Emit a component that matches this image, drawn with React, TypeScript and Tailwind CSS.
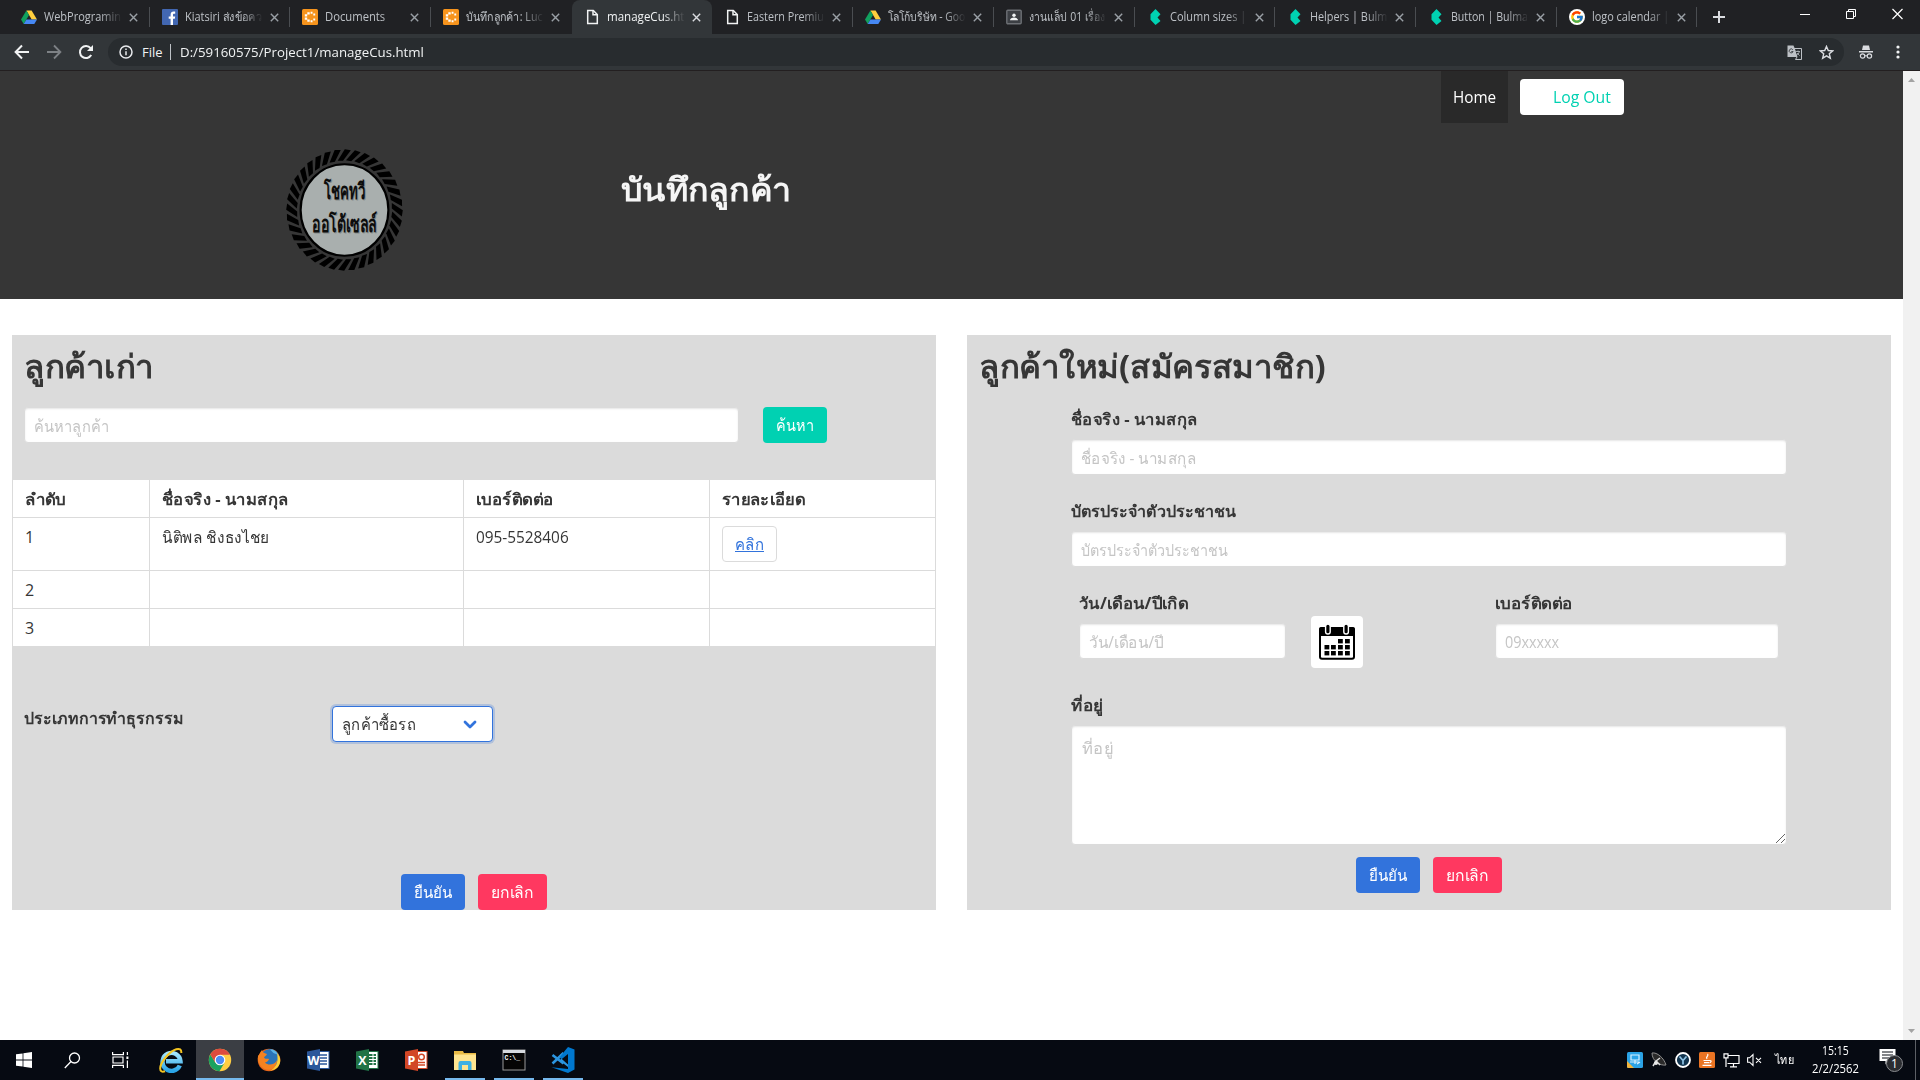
import React, { useLayoutEffect, useRef, useState } from "react";
import { FcGoogle } from "react-icons/fc";

/* Text that is condensed or widened to a given width in pixels. */
function Fit({ w, className = "", children }: { w: number; className?: string; children: React.ReactNode }) {
  const ref = useRef<HTMLSpanElement>(null);
  const [scale, setScale] = useState(1);
  useLayoutEffect(() => {
    if (ref.current) setScale(w / ref.current.offsetWidth);
  }, [w]);
  return (
    <span className={`inline-flex shrink-0 align-top ${className}`} style={{ width: w }}>
      <span ref={ref} className="inline-block origin-left whitespace-nowrap" style={{ transform: `scaleX(${scale})` }}>
        {children}
      </span>
    </span>
  );
}

const DriveIcon = () => (
  <svg width="16" height="16" viewBox="0 0 16 16">
    <path d="M5.4 1.5h5.2L16 10.6h-5.3z" fill="#ffcf3e" />
    <path d="M5.4 1.5L8 6 2.7 15 0 10.6z" fill="#11a05e" />
    <path d="M5.4 10.6H16L13.3 15H2.7z" fill="#4688f4" />
  </svg>
);
const FacebookIcon = () => (
  <svg width="16" height="16" viewBox="0 0 16 16">
    <rect width="16" height="16" rx="1" fill="#4267b2" />
    <path d="M8.6 16V9.800H6.700V7.400h1.900V5.700c0-2 1.200-3.100 3-3.100.8 0 1.600.1 1.600.1v2.100h-1.100c-1 0-1.100.5-1.100 1.100v1.500h2.200l-.4 2.400H11V16z" fill="#fff" />
  </svg>
);
const LucidIcon = () => (
  <svg width="16" height="16" viewBox="0 0 16 16" fill="#fff">
    <rect width="16" height="16" rx="1.5" fill="#f7941d" />
    <path d="M2.800 5.200h2.400v2.200H2.800zM2.800 8.600h2.400v2.200H2.800zM5.300 3.200h2.400v2.200H5.300zM5.300 10.600h2.400v2.200H5.300z" />
    <path d="M8.600 2.800h1.900v1.900H8.600zM8.600 11.300h1.900v1.900H8.600zM11.300 4.600h1.900v1.900h-1.900zM11.300 9.500h1.900v1.900h-1.900z" />
  </svg>
);
const FileIcon = () => (
  <svg width="16" height="16" viewBox="0 0 16 16" fill="none" stroke="#f1f3f4" strokeWidth="1.5">
    <path d="M3.700 1.500h5.600l4 4v9H3.700z" />
    <path d="M9 1.800v4h4" />
  </svg>
);
const ClassroomIcon = () => (
  <svg width="16" height="16" viewBox="0 0 16 16">
    <rect x=".8" y="1.300" width="14.400" height="13.400" rx="1" fill="#3c3f44" stroke="#6d7075" strokeWidth="1.400" />
    <circle cx="8" cy="6.300" r="1.700" fill="#f1f3f4" />
    <path d="M4 11.300c0-3.600 8-3.600 8 0z" fill="#f1f3f4" />
  </svg>
);
const BulmaIcon = () => (
  <svg width="16" height="16" viewBox="0 0 16 16">
    <path d="M3.500 5.300L8.500 0l5 5.300-3 3.200 3 3.400-5 4.100-5-5.300z" fill="#00d1b2" />
  </svg>
);
const GoogleIcon = () => (
  <span className="flex size-4 items-center justify-center rounded-full bg-white">
    <FcGoogle size={14} />
  </span>
);

const tabs = [
  { icon: <DriveIcon />, title: "WebProgramin", w: 77 },
  { icon: <FacebookIcon />, title: "Kiatsiri ส่งข้อคว", w: 77 },
  { icon: <LucidIcon />, title: "Documents", w: 60 },
  { icon: <LucidIcon />, title: "บันทึกลูกค้า: Luc", w: 77 },
  { icon: <FileIcon />, title: "manageCus.ht", w: 77, active: true },
  { icon: <FileIcon />, title: "Eastern Premiu", w: 77 },
  { icon: <DriveIcon />, title: "โลโก้บริษัท - Goo", w: 77 },
  { icon: <ClassroomIcon />, title: "งานแล็ป 01 เรื่อง", w: 76 },
  { icon: <BulmaIcon />, title: "Column sizes |", w: 76 },
  { icon: <BulmaIcon />, title: "Helpers | Bulm", w: 77 },
  { icon: <BulmaIcon />, title: "Button | Bulma", w: 77 },
  { icon: <GoogleIcon />, title: "logo calendar |", w: 77 },
];

function TabStrip() {
  return (
    <div className="flex h-[34px] bg-[#202124] pl-[9px]">
      {tabs.map((t, i) => (
        <div
          key={i}
          className={`flex h-full w-[140.7px] items-center pl-3 ${t.active ? "rounded-t-lg bg-[#323639] text-[#f1f3f4]" : "text-[#bdc1c6]"}`}
        >
          {t.icon}
          <div className="ml-[7px] w-[78px] text-[12px] leading-5 [mask-image:linear-gradient(to_right,black_72%,transparent)]">
            <Fit w={t.w}>{t.title}</Fit>
          </div>
          <svg className="ml-[7px]" width="9" height="9" viewBox="0 0 9 9" stroke={t.active ? "#dadce0" : "#9aa0a6"} strokeWidth="1.400">
            <path d="M.8.8l7.400 7.400M8.200.8L.8 8.200" />
          </svg>
          {i !== 3 && i !== 4 && <div className="ml-auto h-5 w-px bg-[#4a4d51]" />}
        </div>
      ))}
      <svg className="mt-[11px] ml-[16px]" width="12" height="12" viewBox="0 0 12 12" stroke="#dadce0" strokeWidth="2">
        <path d="M6 0v12M0 6h12" />
      </svg>
      <div className="mt-[8px] ml-auto flex h-3 gap-[35px] pr-[17px]">
        <svg width="11" height="12" viewBox="0 0 11 12" stroke="#fff">
          <path d="M0 6.500h10" />
        </svg>
        <svg width="11" height="12" viewBox="0 0 11 12" stroke="#fff" fill="none">
          <path d="M.5 3.500h7v7h-7zM2.500 3.500v-2h7v7h-2" />
        </svg>
        <svg width="11" height="12" viewBox="0 0 11 12" stroke="#fff" strokeWidth="1.200">
          <path d="M.5 1l10 10M10.500 1l-10 10" />
        </svg>
      </div>
    </div>
  );
}

function Toolbar() {
  return (
    <div className="flex h-[37px] items-center border-b border-[#231f20] bg-[#323639]">
      <svg className="ml-[14px]" width="16" height="16" viewBox="0 0 16 16" stroke="#f1f3f4" strokeWidth="2" fill="none">
        <path d="M15 8H2M8 1.500L1.600 8 8 14.500" />
      </svg>
      <svg className="ml-4" width="16" height="16" viewBox="0 0 16 16" stroke="#7d8185" strokeWidth="1.800" fill="none">
        <path d="M1 8h13M8 1.500L14.400 8 8 14.500" />
      </svg>
      <svg className="ml-4" width="16" height="16" viewBox="0 0 16 16" stroke="#f1f3f4" strokeWidth="2" fill="none">
        <path d="M13.200 11A6 6 0 1 1 12.600 4.200" />
        <path d="M15 1v6H9z" fill="#f1f3f4" stroke="none" />
      </svg>
      <div className="ml-[14px] flex h-7 w-[1736px] items-center rounded-full bg-[#282c2f] pl-[11px] text-[13px] leading-5 text-[#f1f3f4]">
        <svg width="14" height="14" viewBox="0 0 14 14" fill="none" stroke="#e8eaed" strokeWidth="1.500">
          <circle cx="7" cy="7" r="6" />
          <path d="M7 6.200v4M7 3.500v1.600" />
        </svg>
        <Fit w={21} className="ml-[9px]">File</Fit>
        <div className="mr-[9px] ml-[7px] h-4 w-px bg-[#bdc1c6]" />
        <Fit w={244}>D:/59160575/Project1/manageCus.html</Fit>
        <svg className="ml-auto" width="15" height="15" viewBox="0 0 15 15">
          <path d="M.5.5h6L8 4l2 8H.5z" fill="#bdc1c6" />
          <path d="M7 3.500h7.500v11H8.500L10 12z" fill="none" stroke="#bdc1c6" />
          <path d="M5.800 4.700a2 2 0 1 0 .3 1.800H4.300" fill="none" stroke="#45494d" />
          <path d="M9 6.500h4M11 5.500v1M12.300 6.600c-.4 2-1.500 3-3 3.800M10 8l2.600 2.700" fill="none" stroke="#bdc1c6" strokeWidth=".8" />
        </svg>
        <svg className="mr-[10px] ml-[17px]" width="15" height="15" viewBox="0 0 16 16" fill="none" stroke="#dadce0" strokeWidth="1.500">
          <path d="M8 1.500l1.900 4.400 4.700.4-3.600 3.100 1.100 4.700L8 11.600l-4.100 2.500L5 9.400 1.400 6.300l4.700-.4z" />
        </svg>
      </div>
      <svg className="ml-[14px]" width="16" height="16" viewBox="0 0 16 16">
        <path d="M5 1.500h6L12 6H4zM1 7h14v1.400H1z" fill="#dadce0" />
        <circle cx="4.600" cy="12" r="2.200" fill="none" stroke="#dadce0" strokeWidth="1.200" />
        <circle cx="11.400" cy="12" r="2.200" fill="none" stroke="#dadce0" strokeWidth="1.200" />
        <path d="M6.500 11.800h3" stroke="#dadce0" />
      </svg>
      <svg className="ml-[22px]" width="4" height="14" viewBox="0 0 4 14" fill="#f1f3f4">
        <circle cx="2" cy="2" r="1.600" />
        <circle cx="2" cy="7" r="1.600" />
        <circle cx="2" cy="12" r="1.600" />
      </svg>
    </div>
  );
}

function LogoText({ dx, dy, fill }: { dx: number; dy: number; fill: string }) {
  return (
    <g fill={fill} fontFamily="Noto Sans, sans-serif" fontWeight="600" fontSize="22" transform={`translate(${dx} ${dy})`}>
      <text x="-21" y="-10.500" textLength="42" lengthAdjust="spacingAndGlyphs">โชคทวี</text>
      <text x="-33" y="22" textLength="66" lengthAdjust="spacingAndGlyphs">ออโต้เซลล์</text>
    </g>
  );
}

function Logo() {
  return (
    <svg width="117" height="122" viewBox="-60 -60 120 120" preserveAspectRatio="none">
      {Array.from({ length: 36 }, (_, i) => (
        <path key={i} d="M-7-48.500L-1.500-48.500 6.500-58.800 .3-59.800z" fill="#000" transform={`rotate(${i * 10})`} />
      ))}
      <circle r="45" fill="#a9afae" stroke="#000" strokeWidth="2.200" />
      <LogoText dx={1} dy={1} fill="#858a89" />
      <LogoText dx={0} dy={0} fill="#0c0c0c" />
    </svg>
  );
}

function Header() {
  return (
    <header className="h-[228px] bg-[#363636]">
      <nav className="flex h-[52px] justify-end pr-[279px] leading-6">
        <a className="flex h-[52px] w-[67px] items-center bg-[#292929] pl-3 text-white">
          <Fit w={43}>Home</Fit>
        </a>
        <a className="mt-2 ml-3 flex h-9 w-[104px] items-center rounded bg-white pl-[33px] text-[#00d1b2]">
          <Fit w={58}>Log Out</Fit>
        </a>
      </nav>
      <div className="flex pt-[26px] pl-[286px]">
        <Logo />
        <h1 className="mt-[22px] ml-[218px] text-[32px] leading-9 font-bold text-[#f5f5f5]">
          <Fit w={170}>บันทึกลูกค้า</Fit>
        </h1>
      </div>
    </header>
  );
}

function Field({ text, w, className }: { text: string; w: number; className: string }) {
  return (
    <div className={`rounded border border-[#dbdbdb] bg-white pt-1.5 pl-[9px] leading-6 text-[#c5c5c5] shadow-[inset_0_1px_2px_rgba(10,10,10,0.1)] ${className}`}>
      <Fit w={w}>{text}</Fit>
    </div>
  );
}

function Actions({ className }: { className: string }) {
  return (
    <div className={`flex gap-[13px] leading-6 font-medium text-white ${className}`}>
      <button className="flex h-9 w-16 items-center justify-center rounded bg-[#3273dc]">
        <Fit w={38}>ยืนยัน</Fit>
      </button>
      <button className="flex h-9 w-[69px] items-center justify-center rounded bg-[#ff3860]">
        <Fit w={43}>ยกเลิก</Fit>
      </button>
    </div>
  );
}

function ExistingCustomers() {
  const cell = "border-r border-b border-[#dbdbdb] pt-[7px] pl-3 text-left align-top";
  return (
    <section className="h-[575px] w-[924px] bg-[#dbdbdb] pt-[13px]">
      <h2 className="pl-[12px] text-[32px] leading-9 font-bold">
        <Fit w={130}>ลูกค้าเก่า</Fit>
      </h2>
      <div className="mt-[23px] flex pl-3">
        <Field text="ค้นหาลูกค้า" w={75} className="h-9 w-[715px]" />
        <button className="ml-6 flex h-9 w-16 items-center justify-center rounded bg-[#00d1b2] leading-6 font-medium text-white">
          <Fit w={38}>ค้นหา</Fit>
        </button>
      </div>
      <table className="mt-[37px] w-[924px] table-fixed border-separate border-spacing-0 border-l border-[#dbdbdb] bg-white leading-6">
        <colgroup>
          <col className="w-[137px]" />
          <col className="w-[314px]" />
          <col className="w-[246px]" />
          <col className="w-[226px]" />
        </colgroup>
        <tbody>
          <tr className="h-[38px] font-bold">
            <th className={cell}><Fit w={41}>ลำดับ</Fit></th>
            <th className={cell}><Fit w={126}>ชื่อจริง - นามสกุล</Fit></th>
            <th className={cell}><Fit w={78}>เบอร์ติดต่อ</Fit></th>
            <th className={cell}><Fit w={83}>รายละเอียด</Fit></th>
          </tr>
          <tr className="h-[53px]">
            <td className={cell}><Fit w={9}>1</Fit></td>
            <td className={cell}><Fit w={107}>นิติพล ชิงธงไชย</Fit></td>
            <td className={cell}><Fit w={93}>095-5528406</Fit></td>
            <td className={cell}>
              <a className="mt-px flex h-9 w-[55px] items-center justify-center rounded border border-[#dbdbdb] text-[#3273dc] underline">
                <Fit w={29}>คลิก</Fit>
              </a>
            </td>
          </tr>
          {["2", "3"].map((n) => (
            <tr key={n} className="h-[38px]">
              <td className={cell}><Fit w={9}>{n}</Fit></td>
              <td className={cell} />
              <td className={cell} />
              <td className={cell} />
            </tr>
          ))}
        </tbody>
      </table>
      <div className="mt-[59px] flex pl-3 leading-6">
        <div className="w-[308px] font-bold">
          <Fit w={160}>ประเภทการทำธุรกรรม</Fit>
        </div>
        <div className="flex h-9 w-[161px] items-center rounded border border-[#3273dc] bg-white pl-[9px] shadow-[0_0_0_2px_rgba(50,115,220,0.25)]">
          <Fit w={74}>ลูกค้าซื้อรถ</Fit>
          <svg className="mt-px mr-[15px] ml-auto" width="14" height="10" viewBox="0 0 14 10" fill="none" stroke="#3273dc" strokeWidth="2.800" strokeLinecap="round" strokeLinejoin="round">
            <path d="M2 2l5 5 5-5" />
          </svg>
        </div>
      </div>
      <Actions className="mt-[132px] pl-[389px]" />
    </section>
  );
}

function CalendarIcon() {
  const dots = [[27, 24], [34, 24], [13.5, 30], [20, 30], [27, 30], [34, 30], [13.5, 36], [20, 36], [27, 36], [34, 36]];
  return (
    <svg width="52" height="52" viewBox="0 0 52 52">
      <rect x="9" y="12.200" width="34" height="30.600" rx="2" fill="#fff" stroke="#000" strokeWidth="2" />
      <path d="M8 13a2 2 0 0 1 2-2h32a2 2 0 0 1 2 2v7H8z" />
      <rect x="14.600" y="8" width="4.600" height="10" rx="2.300" stroke="#fff" strokeWidth="1.400" />
      <rect x="32.800" y="8" width="4.600" height="10" rx="2.300" stroke="#fff" strokeWidth="1.400" />
      {dots.map(([x, y], i) => (
        <rect key={i} x={x} y={y - 1} width="4.800" height="4.400" />
      ))}
    </svg>
  );
}

function NewCustomer() {
  return (
    <section className="ml-[31px] h-[575px] w-[924px] bg-[#dbdbdb] pt-[13px]">
      <h2 className="pl-[12px] text-[32px] leading-9 font-bold">
        <Fit w={347}>ลูกค้าใหม่(สมัครสมาชิก)</Fit>
      </h2>
      <div className="mt-[23px] ml-[104px] w-[716px] leading-6">
        <div className="font-bold"><Fit w={126}>ชื่อจริง - นามสกุล</Fit></div>
        <Field text="ชื่อจริง - นามสกุล" w={115} className="mt-2 h-9" />
        <div className="mt-6 font-bold"><Fit w={165}>บัตรประจำตัวประชาชน</Fit></div>
        <Field text="บัตรประจำตัวประชาชน" w={147} className="mt-2 h-9" />
        <div className="mt-6 flex h-[102px] pl-2">
          <div className="w-[207px]">
            <div className="font-bold"><Fit w={109}>วัน/เดือน/ปีเกิด</Fit></div>
            <Field text="วัน/เดือน/ปี" w={75} className="mt-2 h-9" />
          </div>
          <button className="mt-[25px] ml-[25px] h-[52px] w-[52px] rounded bg-white">
            <CalendarIcon />
          </button>
          <div className="ml-[132px] w-[284px]">
            <div className="font-bold"><Fit w={78}>เบอร์ติดต่อ</Fit></div>
            <Field text="09xxxxx" w={54} className="mt-2 h-9" />
          </div>
        </div>
        <div className="font-bold"><Fit w={32}>ที่อยู่</Fit></div>
        <div className="mt-2 flex h-[120px] items-end justify-between rounded border border-[#dbdbdb] bg-white shadow-[inset_0_1px_2px_rgba(10,10,10,0.1)]">
          <span className="self-start pt-[10px] pl-[10px] text-[#c5c5c5]"><Fit w={31}>ที่อยู่</Fit></span>
          <svg className="mr-px mb-px" width="9" height="9" viewBox="0 0 9 9" stroke="#555" strokeWidth=".9">
            <path d="M0 9l9-9M5 9l4-4" />
          </svg>
        </div>
      </div>
      <Actions className="mt-3 pl-[389px]" />
    </section>
  );
}

const OfficeIcon = ({ color, letter, children }: { color: string; letter: string; children: React.ReactNode }) => (
  <svg width="24" height="24" viewBox="0 0 24 24">
    <rect x="12" y="3.500" width="11" height="17" fill="#fff" stroke={color} />
    {children}
    <path d="M1 3.500L14 1v22L1 20.500z" fill={color} />
    <text x="7.500" y="16.500" fontSize="12.500" fontWeight="700" fill="#fff" textAnchor="middle" fontFamily="Open Sans, sans-serif">{letter}</text>
  </svg>
);

const taskIcons: React.ReactNode[] = [
  <svg width="24" height="26" viewBox="0 0 24 26">
    <defs>
      <linearGradient id="ie" x1="0" y1="0" x2="0" y2="1">
        <stop offset="0" stopColor="#a5e6fc" />
        <stop offset="1" stopColor="#2aa5e8" />
      </linearGradient>
    </defs>
    <path d="M20.800 18.500A9 9 0 1 1 21.500 14.200H7" fill="none" stroke="url(#ie)" strokeWidth="4.400" />
    <path d="M6 24.200C-.5 26.500-.5 19 6.500 10.500S23-1.500 22.300 6" fill="none" stroke="#f4c521" strokeWidth="2" />
  </svg>,
  <svg width="24" height="24" viewBox="-12 -12 24 24">
    <circle r="11.200" fill="#ffcd42" />
    <path d="M-9.700-5.600A11.200 11.200 0 0 0-.5 11.200L4.600 2.600-4.600 2.600z" fill="#1aa260" />
    <path d="M-9.700-5.600A11.200 11.200 0 0 1 9.900-5.200H0L-4.600 2.700z" fill="#dd4b3e" />
    <circle r="5.300" fill="#fff" />
    <circle r="4.200" fill="#4c8bf5" />
  </svg>,
  <svg width="24" height="24" viewBox="-12 -12 24 24">
    <circle r="11.300" fill="#e8661a" />
    <circle cx="1" cy="-1.500" r="9.400" fill="#2b74b8" />
    <path d="M1-10.500c4-.5 7 2 7.500 5-2-1-4-1-5-2.500z" fill="#5cb4e6" />
    <path d="M-11-4C-9-6-9-8-7-10c0 2 2 3 5 4-1 2-2 2-3 3.500 1 2 4 1 5 1.500-1 3-3 3-4 3.500C-1 6 6 5 8 0c0 8-6 11-11 9.500S-12 2-11-4z" fill="#f58220" />
    <path d="M8-7c4 4 4.500 10 .5 14.500C7 9 4 10.500 1 10.800 8 7 9.500 1 8-7z" fill="#fed034" />
  </svg>,
  <OfficeIcon color="#2b579a" letter="W">
    <path d="M14 7h7M14 10h7M14 13h7M14 16h7" stroke="#2b579a" strokeWidth="1.300" />
  </OfficeIcon>,
  <OfficeIcon color="#217346" letter="X">
    <path d="M14 7h7M14 10h7M14 13h7M14 16h7" stroke="#217346" strokeWidth="1.800" />
    <path d="M18 5v14" stroke="#fff" />
  </OfficeIcon>,
  <OfficeIcon color="#d24726" letter="P">
    <path d="M14 14.500h7M14 17h7" stroke="#d24726" strokeWidth="1.300" />
    <circle cx="17.500" cy="9" r="2.800" fill="none" stroke="#d24726" strokeWidth="1.500" />
  </OfficeIcon>,
  <svg width="24" height="24" viewBox="0 0 24 24">
    <path d="M1 3h9l1 2h12v17H1z" fill="#e9bb45" />
    <path d="M1 6.500h22V22H1z" fill="#ffe58f" />
    <path d="M5.500 22v-7a2 2 0 0 1 2-2h9a2 2 0 0 1 2 2v7h-3.500v-5H9v5z" fill="#3fb1e3" />
  </svg>,
  <svg width="24" height="24" viewBox="0 0 24 24">
    <rect x="1" y="2" width="22" height="20" fill="#050505" stroke="#999" />
    <rect x="1" y="2" width="22" height="3" fill="#d5d9de" />
    <text x="2.500" y="11.500" fontSize="6.500" fontWeight="700" fill="#fff" fontFamily="Liberation Mono, monospace">C:\_</text>
  </svg>,
  <svg width="24" height="26" viewBox="0 0 24 26">
    <path d="M17 0l6.500 2.600v19.800L17 26 .5 20.300 17 22z" fill="#0078cf" />
    <path d="M1.500 8l11 8.500M1.500 16.500L12.500 6" fill="none" stroke="#2b95e0" strokeWidth="2.600" />
    <path d="M17 5.500v12L10 11.500z" fill="#060a12" />
    <path d="M17 0v7l-6.500 5.200-2-2z" fill="#0078cf" />
    <path d="M17 17.500V20L8.500 13.500l2-1.800z" fill="#2b95e0" />
  </svg>,
];

function Taskbar() {
  return (
    <footer className="flex h-10 items-center bg-[#060a12] text-white">
      <svg className="ml-4" width="16" height="16" viewBox="0 0 16 16" fill="#fff">
        <path d="M0 2.300L6.600 1.400v6.200H0zM7.400 1.300L16 0v7.600H7.400zM0 8.400h6.600v6.200L0 13.700zM7.400 8.400H16V16l-8.600-1.300z" />
      </svg>
      <svg className="ml-8" width="17" height="17" viewBox="0 0 17 17" fill="none" stroke="#fff" strokeWidth="1.300">
        <circle cx="10.500" cy="6" r="5" />
        <path d="M7 9.500L.8 16" />
      </svg>
      <svg className="ml-[31px]" width="17" height="16" viewBox="0 0 17 16" fill="none" stroke="#fff" strokeWidth="1.200">
        <path d="M.6 0v2.600h10.800V0M.6 16v-2.600h10.800V16M1 5h10v6H1zM15.400 0v3M15.400 8.500V16" />
        <rect x="14.400" y="4.500" width="2" height="2.500" fill="#fff" stroke="none" />
      </svg>
      <div className="ml-[18px] flex h-full gap-px">
        {taskIcons.map((icon, i) => (
          <div key={i} className={`flex h-full w-12 flex-col items-center ${i === 0 || i === 8 ? "pt-[7px]" : "pt-2"} ${i === 1 ? "bg-[#3b3e44]" : ""}`}>
            {icon}
            {(i === 1 || i > 5) && <div className={`mt-auto h-0.5 shrink-0 bg-[#76b9ed] ${i === 1 ? "w-full" : "w-10"}`} />}
          </div>
        ))}
      </div>
      <div className="ml-auto flex h-full items-center">
        <svg width="16" height="16" viewBox="0 0 16 16">
          <rect width="16" height="16" rx="1.500" fill="#2ba3e6" />
          <path d="M0 9l7 7H1.500A1.500 1.500 0 0 1 0 14.500z" fill="#f2b43c" />
          <path d="M4 3h8v5H4zM3 10h9M8 8v4M10 12l3-2" fill="none" stroke="#d8f1ff" strokeWidth="1.200" />
        </svg>
        <svg className="ml-2" width="16" height="16" viewBox="0 0 16 16">
          <path d="M1 1c5-1 12 5 14 12-6 1-14-4-14-12z" fill="#2a2a2a" stroke="#8d8d8d" />
          <path d="M2 14l3-5 4 4M5 9l4-3" stroke="#ddd" strokeWidth="1.500" fill="none" />
          <circle cx="5" cy="11" r="2" fill="#e8e8e8" />
        </svg>
        <svg className="ml-2" width="16" height="16" viewBox="0 0 16 16">
          <circle cx="8" cy="8" r="7" fill="#12354f" stroke="#fff" strokeWidth="1.800" />
          <path d="M4.500 4.500L8 8.500l3.500-4M8 8.500V12.500" stroke="#8fc4e6" strokeWidth="1.700" fill="none" />
        </svg>
        <svg className="ml-2" width="16" height="16" viewBox="0 0 16 16">
          <rect width="16" height="16" rx="1.500" fill="#ea7423" />
          <path d="M8.500 2c2 2-2.500 2.500-.5 5M4.500 8.500h6.500c2 0 1 2-.5 2.300M5 10.700h5M3.500 13.300h9" stroke="#fff" strokeWidth="1.200" fill="none" />
        </svg>
        <svg className="ml-2" width="17" height="15" viewBox="0 0 17 15" fill="none" stroke="#fff" strokeWidth="1.200">
          <path d="M5 2.500h11v8H4.500M10.500 10.500v3M7 13.800h7M1 .8h4v4H1zM3 5v9" />
        </svg>
        <svg className="ml-[7px]" width="16" height="14" viewBox="0 0 16 14" fill="none" stroke="#fff" strokeWidth="1.100">
          <path d="M.6 4.800h2L6 1.500v11L2.600 9.200h-2zM9 4.800l5 5M14 4.800l-5 5" />
        </svg>
        <Fit w={19} className="ml-[12px] text-[12px] leading-5">ไทย</Fit>
        <div className="ml-[16px] flex w-[50px] flex-col items-center text-[12px] leading-[18px]">
          <Fit w={27}>15:15</Fit>
          <Fit w={47}>2/2/2562</Fit>
        </div>
        <div className="relative ml-[19px] h-6 w-6">
          <svg width="17" height="17" viewBox="0 0 17 17">
            <path d="M.5 1h16v12H10L6.500 16.500V13h-6z" fill="#fff" />
            <path d="M3 4h11M3 7h11M3 10h7" stroke="#060a12" strokeWidth="1.200" />
          </svg>
          <span className="absolute top-[7px] left-[7px] flex size-[17px] items-center justify-center rounded-full border border-[#8a8c90] bg-[#2b2d31] text-[12px] leading-none">1</span>
        </div>
        <div className="mr-1 ml-[12px] h-full w-px bg-[#5d6066]" />
      </div>
    </footer>
  );
}

export default function App() {
  return (
    <div className="flex h-[1080px] w-[1920px] flex-col overflow-hidden bg-white font-['Open_Sans','Noto_Sans',sans-serif] text-[16px] text-[#363636]">
      <TabStrip />
      <Toolbar />
      <div className="flex h-[969px]">
        <main className="w-[1903px]">
          <Header />
          <div className="flex pt-9 pl-3">
            <ExistingCustomers />
            <NewCustomer />
          </div>
        </main>
        <div className="flex w-[17px] flex-col items-center justify-between bg-[#f1f1f1] py-[7px]">
          <svg width="7" height="4" viewBox="0 0 7 4" fill="#a3a3a3"><path d="M3.500 0L7 4H0z" /></svg>
          <svg width="7" height="4" viewBox="0 0 7 4" fill="#a3a3a3"><path d="M0 0h7L3.500 4z" /></svg>
        </div>
      </div>
      <Taskbar />
    </div>
  );
}
